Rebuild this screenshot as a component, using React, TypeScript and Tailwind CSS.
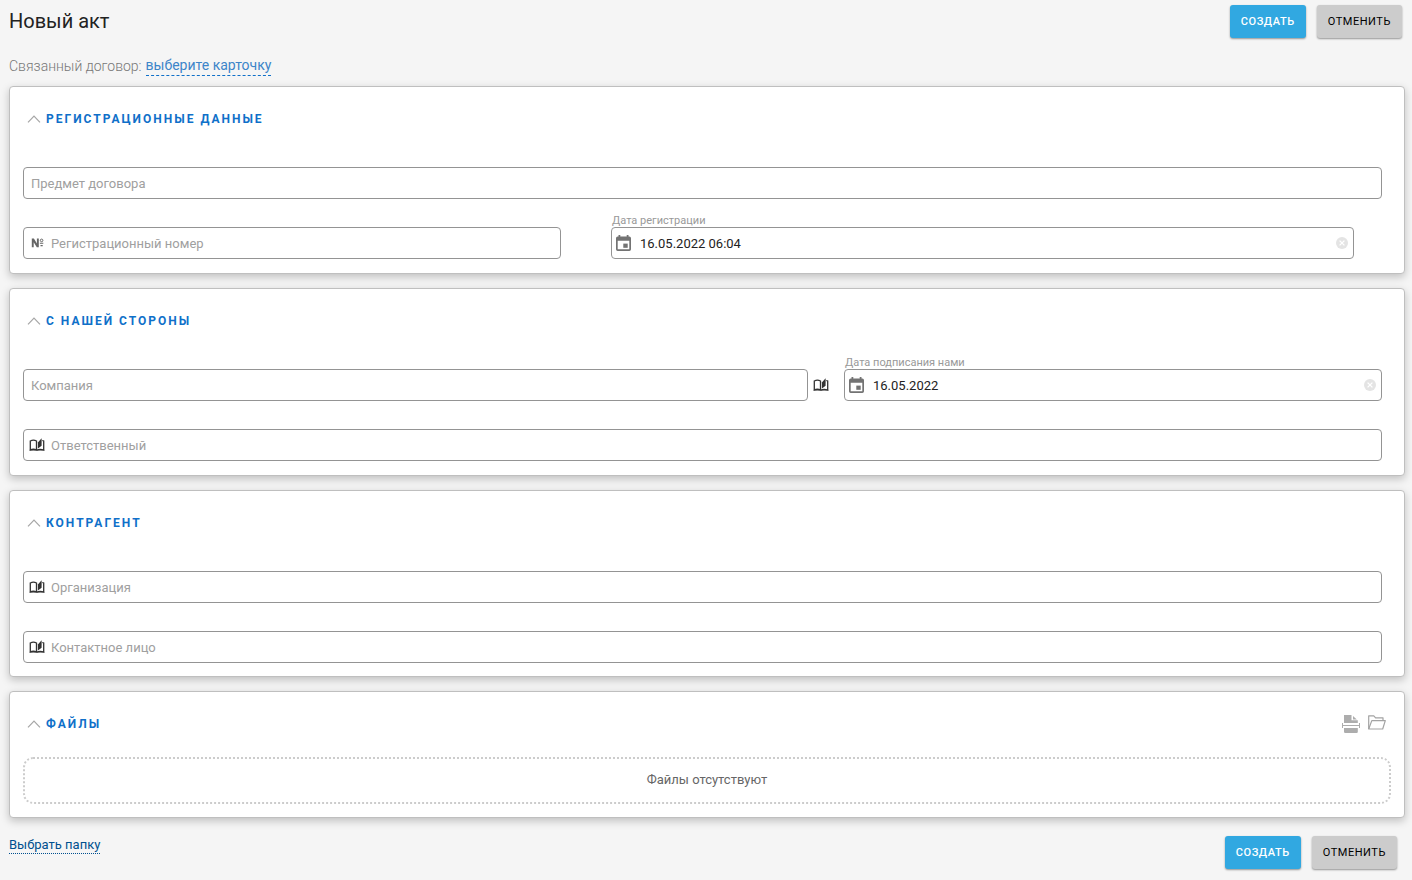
import { useState } from 'react';
import type { ReactNode } from 'react';

function ChevronIcon({ open }: { open: boolean }) {
  return (
    <svg
      viewBox="0 0 14 8"
      className={`w-3.5 h-2 text-[#a6a6a6] ${open ? '' : 'rotate-180'}`}
      fill="none"
      stroke="currentColor"
      strokeWidth="1.2"
      aria-hidden="true"
    >
      <path d="M1 7.3L7 1L13 7.3" />
    </svg>
  );
}

function BookIcon() {
  return (
    <svg viewBox="0 0 16 14" className="w-4 h-3.5 shrink-0 text-[#333333]" aria-hidden="true">
      <path
        d="M1.3 11.9V3Q4.4 1.4 7.5 3V11.9Q4.4 10.6 1.3 11.9Z"
        fill="none"
        stroke="currentColor"
        strokeWidth="1.3"
      />
      <path d="M8.9 4.4L12.6 0.2V7.8L8.9 10.6Z" fill="currentColor" />
      <path
        d="M13.3 2.5L14.7 3V12Q11 10.6 7.7 12.1"
        fill="none"
        stroke="currentColor"
        strokeWidth="1.3"
      />
      <path d="M0.7 11.8H6.6L7.8 12.3L9 11.8H15.3V12.6H0.7Z" fill="currentColor" />
    </svg>
  );
}

function NumberIcon() {
  return (
    <svg viewBox="0 0 13 10" className="w-[13px] h-2.5 ml-0.5 mr-px shrink-0 text-[#666666]" aria-hidden="true">
      <path d="M0.8 9.3V0.5H2.9L5.9 5.6V0.5H7.8V9.3H5.8L2.7 4.2V9.3Z" fill="currentColor" />
      <circle cx="10.6" cy="2.4" r="1.3" fill="none" stroke="currentColor" />
      <path d="M8.9 5.3H12.3M9.5 7.6H11.7" stroke="currentColor" strokeWidth="1.1" />
    </svg>
  );
}

function CalendarIcon() {
  return (
    <svg viewBox="0 0 15 16" className="w-[15px] h-4 shrink-0 text-[#737373]" aria-hidden="true">
      <path
        fillRule="evenodd"
        fill="currentColor"
        d="M2.5 0H4.3V1.6H10.7V0H12.5V1.6H13.3A1.7 1.7 0 0 1 15 3.3V14.3A1.7 1.7 0 0 1 13.3 16H1.7A1.7 1.7 0 0 1 0 14.3V3.3A1.7 1.7 0 0 1 1.7 1.6H2.5ZM1.7 5.8V14.3H13.3V5.8Z"
      />
      <rect x="7.3" y="8.6" width="4.4" height="4.2" fill="currentColor" />
    </svg>
  );
}

function ClearIcon() {
  return (
    <svg viewBox="0 0 12 12" className="w-3 h-3" aria-hidden="true">
      <circle cx="6" cy="6" r="6" fill="#e4e4e4" />
      <path d="M3.6 3.6L8.4 8.4M8.4 3.6L3.6 8.4" stroke="#ffffff" strokeWidth="1.3" />
    </svg>
  );
}

function ScanIcon() {
  return (
    <svg viewBox="0 0 18 18" className="w-[18px] h-[18px] text-[#adadad]" aria-hidden="true">
      <path d="M2 0H9.5V5.2H15.8V8H2Z" fill="currentColor" />
      <path d="M11 1L14.8 4.4H11Z" fill="currentColor" />
      <path d="M0.5 8V13M17.5 8V13M0.5 10.5H17.5" stroke="currentColor" fill="none" />
      <path d="M2 13H15.8V16.8Q15.8 18 14.6 18H3.2Q2 18 2 16.8Z" fill="currentColor" />
    </svg>
  );
}

function FolderIcon() {
  return (
    <svg
      viewBox="0 0 18 15"
      className="w-[18px] h-[15px] text-[#a3a3a3]"
      fill="none"
      stroke="currentColor"
      strokeWidth="1.2"
      strokeLinejoin="round"
      aria-hidden="true"
    >
      <path d="M0.7 14V0.8H5.8L7.6 2.8H15V5.6" />
      <path d="M0.7 14L3.8 5.6H17.3L14.7 14Z" />
    </svg>
  );
}

type SectionProps = {
  title: string;
  actions?: ReactNode;
  children: ReactNode;
};

function Section({ title, actions, children }: SectionProps) {
  const [open, setOpen] = useState(true);

  return (
    <section className="bg-white border border-[#bfbfbf] rounded shadow-[0_3px_9px_rgba(0,0,0,0.22)] px-[13px]">
      <header className="h-16 flex items-center justify-between pr-[5px]">
        <h2>
          <button
            type="button"
            aria-expanded={open}
            onClick={() => setOpen(!open)}
            className="flex items-center gap-[5px] pl-1 text-xs font-bold uppercase tracking-[2px] text-[#0f70c9] cursor-pointer"
          >
            <ChevronIcon open={open} />
            {title}
          </button>
        </h2>
        {actions}
      </header>
      {open && children}
    </section>
  );
}

type FieldProps = {
  id: string;
  placeholder?: string;
  label?: string;
  icon?: ReactNode;
  defaultValue?: string;
};

function Field({ id, placeholder, label, icon, defaultValue = '' }: FieldProps) {
  const [value, setValue] = useState(defaultValue);

  return (
    <div className="min-w-0">
      <div className="h-4 flex items-end px-px">
        {label && (
          <label htmlFor={id} className="text-[11px] leading-[13px] text-[#999999]">
            {label}
          </label>
        )}
      </div>
      <div
        className={`h-8 flex items-center gap-1.5 border border-[#949494] rounded pr-[5px] ${
          label ? 'pl-1' : icon ? 'pl-[5px]' : 'pl-[7px]'
        }`}
      >
        {icon}
        <input
          id={id}
          type="text"
          aria-label={label ? undefined : placeholder}
          placeholder={placeholder}
          value={value}
          onChange={(e) => setValue(e.target.value)}
          className={`flex-1 min-w-0 pt-0.5 bg-transparent outline-none text-[13px] text-[#222222] placeholder:text-[#a0a0a0] ${
            label ? 'pl-[3px]' : ''
          }`}
        />
        {label && (
          <button type="button" aria-label="Очистить" onClick={() => setValue('')}>
            <ClearIcon />
          </button>
        )}
      </div>
    </div>
  );
}

function FormButtons() {
  const base =
    'h-[33px] px-[11px] pt-0.5 rounded-[3px] text-[11px] uppercase tracking-wider shadow-[0_1px_2px_rgba(0,0,0,0.4)] cursor-pointer';

  return (
    <div className="flex gap-[11px]">
      <button type="submit" className={`${base} bg-[#31a8e1] text-white font-medium`}>
        Создать
      </button>
      <button type="button" className={`${base} bg-[#cccccc] text-black`}>
        Отменить
      </button>
    </div>
  );
}

export default function App() {
  return (
    <form
      onSubmit={(e) => e.preventDefault()}
      className="min-h-screen bg-[#f5f5f5] pl-[9px] pr-[7px] pt-[5px] pb-2.5 font-['Roboto',sans-serif]"
    >
      <div className="flex items-start justify-between pr-[3px]">
        <h1 className="text-xl leading-8 text-[#222222]">Новый акт</h1>
        <FormButtons />
      </div>

      <div className="h-12 pt-[18px] flex items-start gap-1 text-sm">
        <span className="font-light text-[#777777]">Связанный договор:</span>
        <a href="#card" className="leading-[19px] text-[#3d85c9] border-b border-dashed border-[#0f70c9]">
          выберите карточку
        </a>
      </div>

      <main className="flex flex-col gap-3.5">
        <Section title="Регистрационные данные">
          <div className="flex flex-col gap-3 pr-[9px] pb-3.5">
            <Field id="subject" placeholder="Предмет договора" />
            <div className="grid grid-cols-[538fr_743fr] gap-[50px] pr-7">
              <Field id="reg-number" placeholder="Регистрационный номер" icon={<NumberIcon />} />
              <Field
                id="reg-date"
                label="Дата регистрации"
                icon={<CalendarIcon />}
                defaultValue="16.05.2022 06:04"
              />
            </div>
          </div>
        </Section>

        <Section title="С нашей стороны">
          <div className="flex flex-col gap-3 pr-[9px] pb-3.5">
            <div className="grid grid-cols-[785fr_36px_538fr] items-end">
              <Field id="company" placeholder="Компания" />
              <button
                type="button"
                aria-label="Выбрать компанию"
                className="h-8 pl-[5px] flex items-center"
              >
                <BookIcon />
              </button>
              <Field
                id="sign-date"
                label="Дата подписания нами"
                icon={<CalendarIcon />}
                defaultValue="16.05.2022"
              />
            </div>
            <Field id="responsible" placeholder="Ответственный" icon={<BookIcon />} />
          </div>
        </Section>

        <Section title="Контрагент">
          <div className="flex flex-col gap-3 pr-[9px] pb-[13px]">
            <Field id="organization" placeholder="Организация" icon={<BookIcon />} />
            <Field id="contact" placeholder="Контактное лицо" icon={<BookIcon />} />
          </div>
        </Section>

        <Section
          title="Файлы"
          actions={
            <div className="flex items-start gap-2">
              <button type="button" aria-label="Сканировать">
                <ScanIcon />
              </button>
              <button type="button" aria-label="Открыть папку">
                <FolderIcon />
              </button>
            </div>
          }
        >
          <div className="pt-px pb-[13px]">
            <div className="h-[47px] pb-px flex items-center justify-center border-2 border-dotted border-[#cccccc] rounded-[10px] text-[13px] text-[#666666]">
              Файлы отсутствуют
            </div>
          </div>
        </Section>
      </main>

      <div className="flex items-start justify-between pt-[18px] pr-2">
        <a
          href="#folder"
          className="text-[13px] leading-[17px] text-[#00508f] border-b border-dotted border-[#00508f]"
        >
          Выбрать папку
        </a>
        <FormButtons />
      </div>
    </form>
  );
}
